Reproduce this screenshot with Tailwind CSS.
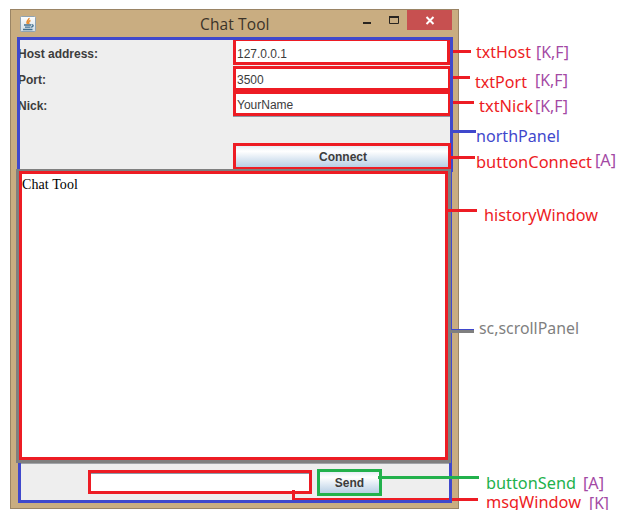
<!DOCTYPE html>
<html lang="en">
<head>
<meta charset="utf-8">
<title>Chat Tool</title>
<script src="https://cdn.jsdelivr.net/npm/@tailwindcss/browser@4"></script>
</head>
<body class="bg-white">
<main class="relative w-[630px] h-[517px] overflow-hidden pl-[10px] pt-[9px] font-['Liberation_Sans',sans-serif] text-[#3c3c3c]">
  <section class="flex flex-col w-[449px] h-[500px] bg-[#c9ad81] border border-[#9a8465]">
    <header class="flex items-start h-[27px] pl-[9px] pr-[6px]">
      <svg class="mt-[6px] shrink-0" width="16" height="16" viewBox="0 0 16 16">
        <defs><linearGradient id="ic" x1="0" y1="0" x2="0" y2="1"><stop offset="0" stop-color="#fff"/><stop offset="1" stop-color="#cfdce5"/></linearGradient></defs>
        <rect x=".5" y=".5" width="15" height="15" rx="1" fill="url(#ic)" stroke="#8fa3b3"/>
        <path d="M9 2C9.500 4 5.500 4.500 7.500 8M10.500 4.500C8 5.500 8.500 6.500 9 8" fill="none" stroke="#e88a2c" stroke-width="1.500"/>
        <path d="M4 9h7M5 11.200h5.500M3 13.500h9.500M11.500 8.700c2.500 0 2 2.300-.5 2.500" fill="none" stroke="#426f8f" stroke-width="1.300"/>
      </svg>
      <h1 class="ml-[164px] mt-[2px] w-[72px] whitespace-nowrap font-['Open_Sans',sans-serif] text-[15.500px] leading-[24px] tracking-[.12px] text-[#3b3329]">Chat Tool</h1>
      <div class="ml-auto flex">
        <svg width="45" height="20" viewBox="0 0 45 20"><path d="M1 13h8" stroke="#292520" stroke-width="2"/><path d="M27 7h10" stroke="#292520" stroke-width="2"/><path d="M27.500 6v7.500h9V6" fill="none" stroke="#292520"/></svg>
        <div class="w-[45px] h-[20px] bg-[#c75050]"><svg width="45" height="20" viewBox="0 0 45 20"><path d="M19.500 7l7 7M26.500 7l-7 7" stroke="#fff" stroke-width="2"/></svg></div>
      </div>
    </header>

    <div class="ml-[6px] w-[436px] h-[132px] border-[#3f48cc] border-t-[3px] border-x-[3px] bg-[#eee] flex text-[12px] leading-[26px]">
      <div class="w-[213px] pt-[1px] font-bold -indent-[2px] overflow-hidden">
        <p>Host address:</p><p>Port:</p><p>Nick:</p>
      </div>
      <div class="w-[217px]">
        <div class="h-[25px] border-[3px] border-t border-[#ed1c24] bg-white pl-[1px] leading-[26px]">127.0.0.1</div>
        <div class="mt-px h-[25px] border-[3px] border-r-2 border-[#ed1c24] bg-white pl-[1px] leading-[22px]">3500</div>
        <div class="h-[25px] border-[3px] border-r-2 border-[#ed1c24] bg-white pl-[1px] leading-[23px]">YourName</div>
        <div class="h-px bg-[#8d99a8]"></div>
        <button class="relative block mt-[26px] w-[218px] h-[26px] border-[3px] border-b-2 border-[#ed1c24] bg-linear-to-b from-[#e6eef6] via-white via-25% to-[#b8cfe5] pl-[2px] pt-[2px] font-bold text-[12px] leading-[19px]">Connect</button>
      </div>
    </div>

    <div class="ml-[5px] w-[436px] h-[294px] border-r border-[#3f48cc]">
      <div class="w-[435px] h-[294px] border-[#7f7f7f] border-t-2 border-x-[3px] border-b-[3px]">
        <div class="w-[429px] h-[289px] border-[3px] border-[#ed1c24] bg-white font-['Liberation_Serif',serif] text-[14px] leading-[21px] tracking-[.1px] text-black">Chat Tool</div>
      </div>
    </div>

    <div class="ml-[7px] w-[434px] h-[40px] border-[#3f48cc] border-x-[3px] border-b-[3px] bg-[#eee]">
      <div class="h-[37px] border-t border-[#a0a4a8] pl-[67px] flex items-start">
        <div class="mt-[6px] w-[224px] h-[24px] border-[3px] border-[#ed1c24] bg-white"><div class="h-px bg-[#8d99a8]"></div></div>
        <button class="ml-[5px] mt-[5px] w-[65px] h-[27px] border-[3px] border-[#22b14c] bg-linear-to-b from-[#e6eef6] via-white via-25% to-[#b8cfe5] pt-[2px] font-bold text-[12px] leading-[19px]">Send</button>
      </div>
    </div>
  </section>

  <!-- callout lines and labels over the window -->
  <svg class="absolute left-0 top-0 font-['Noto_Sans','Open_Sans',sans-serif] text-[17px]" width="630" height="510" viewBox="0 0 630 510">
    <g fill="#ed1c24">
      <path d="M453 50h18v3h-18zM453 76h17v3h-17zM453 101h21v3h-21zM451 156h24v3h-24zM448 209h29v3h-29zM292 490h3v8h154v2H292zM452 498h26v3h-26z"/>
      <text x="476" y="58" textLength="55" lengthAdjust="spacingAndGlyphs">txtHost</text>
      <text x="475" y="88" textLength="52" lengthAdjust="spacingAndGlyphs">txtPort</text>
      <text x="479" y="112" textLength="54" lengthAdjust="spacingAndGlyphs">txtNick</text>
      <text x="476" y="168" textLength="116" lengthAdjust="spacingAndGlyphs">buttonConnect</text>
      <text x="484" y="221" textLength="114" lengthAdjust="spacingAndGlyphs">historyWindow</text>
      <text x="486" y="508" textLength="95" lengthAdjust="spacingAndGlyphs">msgWindow</text>
    </g>
    <g fill="#3f48cc">
      <path d="M453 130h23v3h-23zM452 329h22v1h-22zM451 169h2v3h-2z"/>
      <text x="476" y="142" textLength="84" lengthAdjust="spacingAndGlyphs">northPanel</text>
    </g>
    <g fill="#7f7f7f">
      <path d="M450 330h24v3h-24z"/>
      <text x="479" y="334" textLength="100" lengthAdjust="spacingAndGlyphs">sc,scrollPanel</text>
    </g>
    <g fill="#22b14c">
      <path d="M378 476h101v3H378z"/>
      <text x="486" y="489" textLength="90" lengthAdjust="spacingAndGlyphs">buttonSend</text>
    </g>
    <g fill="#a349a4">
      <text x="536" y="58" textLength="33" lengthAdjust="spacingAndGlyphs">[K,F]</text>
      <text x="535" y="86" textLength="33" lengthAdjust="spacingAndGlyphs">[K,F]</text>
      <text x="535" y="112" textLength="33" lengthAdjust="spacingAndGlyphs">[K,F]</text>
      <text x="595" y="166" textLength="21" lengthAdjust="spacingAndGlyphs">[A]</text>
      <text x="583" y="489" textLength="21" lengthAdjust="spacingAndGlyphs">[A]</text>
      <text x="589" y="509" textLength="20" lengthAdjust="spacingAndGlyphs">[K]</text>
    </g>
  </svg>
</main>
</body>
</html>
